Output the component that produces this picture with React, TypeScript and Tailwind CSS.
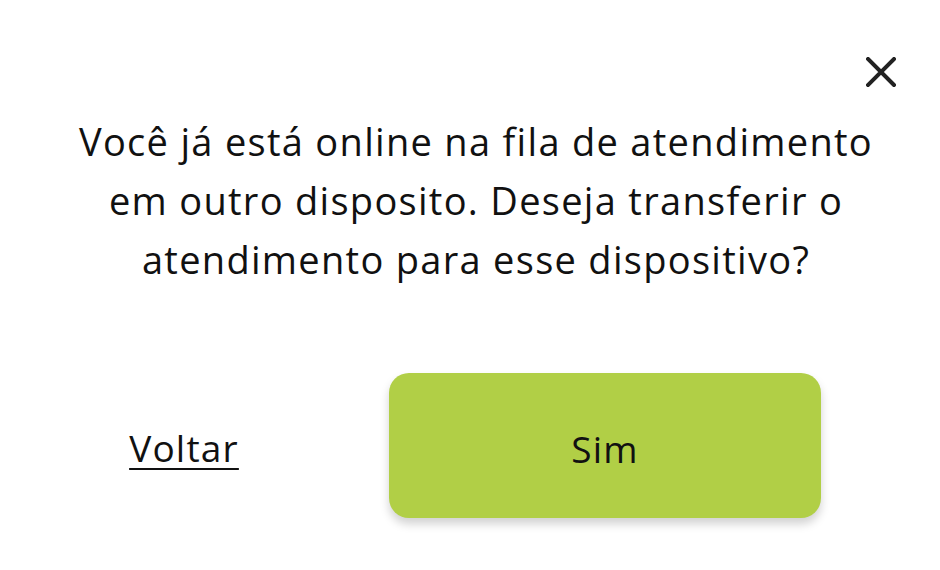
export default function App() {
  return (
    <div className="w-[940px] h-[570px] bg-white text-[#111111] font-['Open_Sans','Liberation_Sans',sans-serif] overflow-hidden">
      {/* Header */}
      <div className="flex justify-end pt-[57px] pr-[44px]">
        <button aria-label="Fechar" className="w-[30px] h-[30px]">
          <svg viewBox="0 0 30 30" className="w-[30px] h-[30px]">
            <path d="M2 2 L28 28 M28 2 L2 28" stroke="#222222" strokeWidth="4" strokeLinecap="square" />
          </svg>
        </button>
      </div>

      {/* Message */}
      <p className="mt-[25px] pl-[12px] text-center text-[38px] leading-[59px] tracking-[1.3px]">
        Você já está online na fila de atendimento
        <br />
        em outro disposito. Deseja transferir o
        <br />
        atendimento para esse dispositivo?
      </p>

      {/* Actions */}
      <div className="flex items-center mt-[84px] pl-[80px] tracking-[1.2px]">
        <div className="w-[208px] pt-[6px] text-center">
          <button className="text-[37px] leading-none underline underline-offset-[6px] decoration-2">
            Voltar
          </button>
        </div>
        <button className="ml-[101px] w-[432px] h-[145px] pt-[6px] rounded-[20px] bg-[#b1cf46] text-[37px] shadow-[0_6px_10px_rgba(0,0,0,0.18)]">
          Sim
        </button>
      </div>
    </div>
  );
}
